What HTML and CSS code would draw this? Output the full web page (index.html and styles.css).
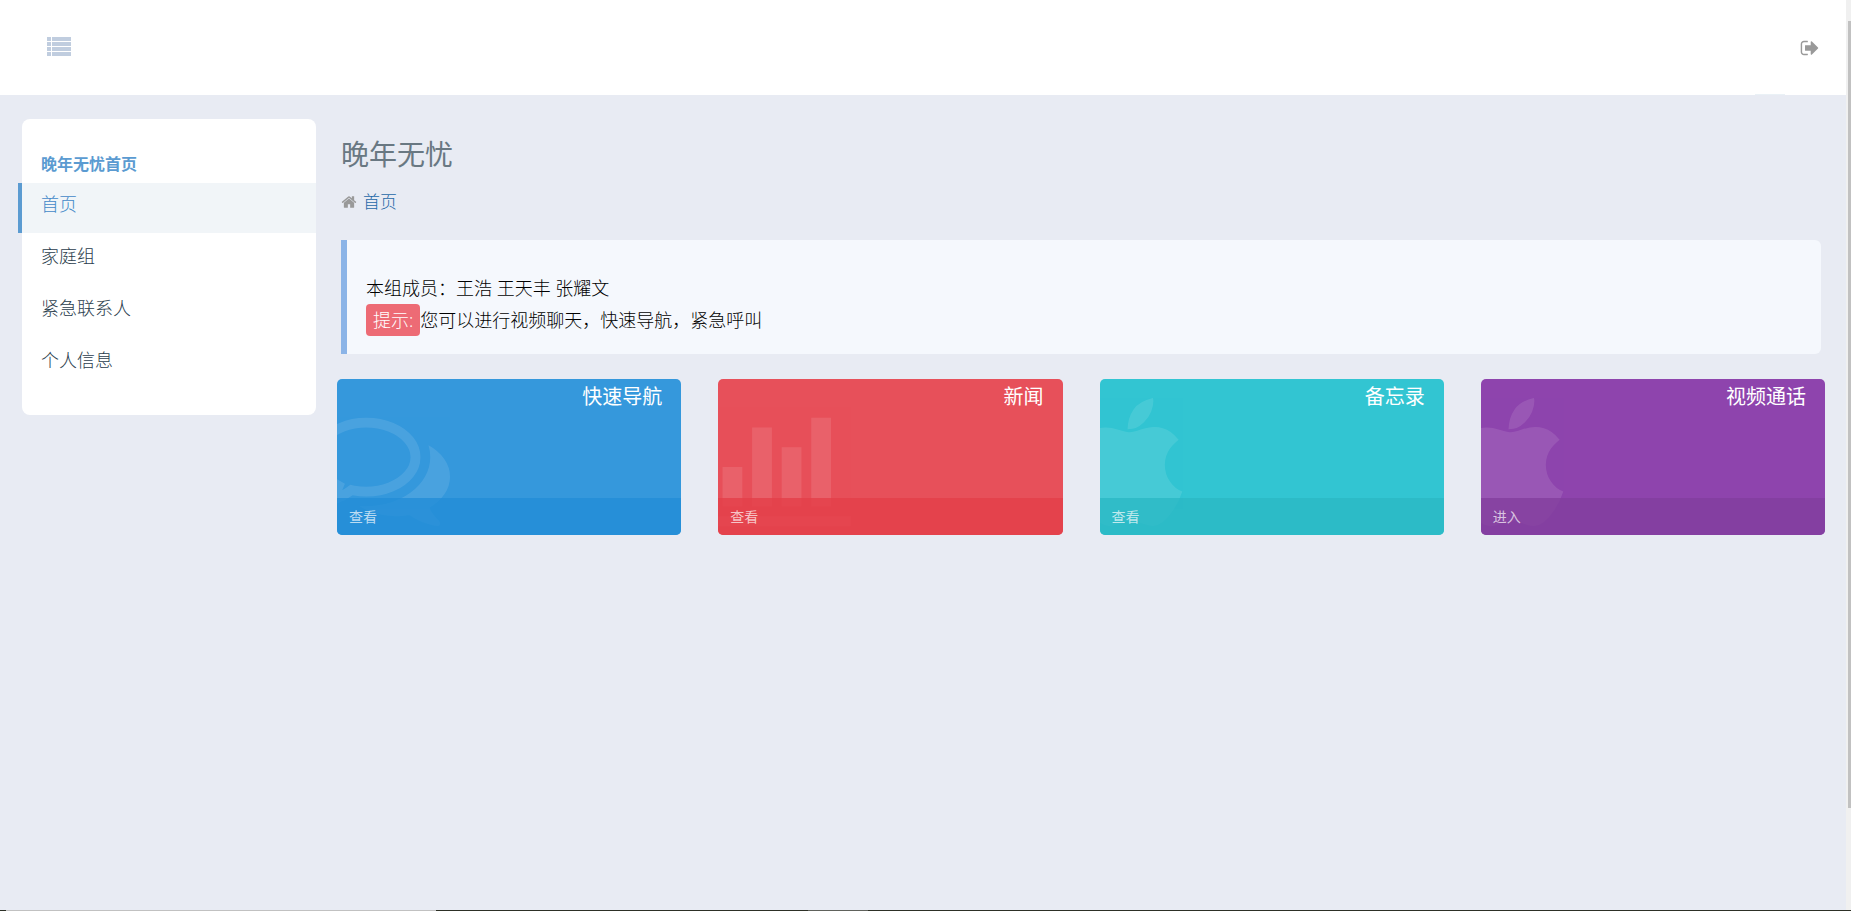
FILE: index.html
```html
<!DOCTYPE html>
<html lang="zh-CN">
<head>
<meta charset="utf-8">
<title>晚年无忧</title>
<link rel="stylesheet" href="styles.css">
</head>
<body>
<header class="topbar">
  <button class="icon-btn menu-btn" type="button" aria-label="菜单">
    <svg width="25" height="19" viewBox="0 0 25 19" fill="currentColor" aria-hidden="true"><path d="M0 0h4v4H0zM5 0h19v4H5zM0 5h4v4H0zM5 5h19v4H5zM0 10h4v4H0zM5 10h19v4H5zM0 15h4v4H0zM5 15h19v4H5z"/></svg>
  </button>
  <button class="icon-btn logout-btn" type="button" aria-label="退出">
    <svg width="20" height="20" viewBox="0 0 1792 1792" fill="currentColor" aria-hidden="true"><path d="M704 1440q0 4 1 20t.5 26.500-3 23.500-10 19.500-20.500 6.500h-320q-119 0-203.500-84.500t-84.500-203.500v-704q0-119 84.500-203.500t203.500-84.500h320q13 0 22.500 9.500t9.500 22.500q0 4 1 20t.5 26.500-3 23.500-10 19.500-20.500 6.500h-320q-66 0-113 47t-47 113v704q0 66 47 113t113 47h312l11.500 1 11.500 3 8 5.500 7 9 2 13.500zm928-544q0 26-19 45l-544 544q-19 19-45 19t-45-19-19-45v-288h-448q-26 0-45-19t-19-45v-384q0-26 19-45t45-19h448v-288q0-26 19-45t45-19 45 19l544 544q19 19 19 45z"/></svg>
  </button>
</header>

<div class="layout">
  <nav class="sidebar" aria-label="主导航">
    <h2 class="sidebar-title">晚年无忧首页</h2>
    <ul class="nav-list">
      <li><a class="nav-link active" href="#" aria-current="page">首页</a></li>
      <li><a class="nav-link" href="#">家庭组</a></li>
      <li><a class="nav-link" href="#">紧急联系人</a></li>
      <li><a class="nav-link" href="#">个人信息</a></li>
    </ul>
  </nav>

  <main class="content">
    <h1 class="page-title">晚年无忧</h1>
    <div class="breadcrumb">
      <svg width="16" height="16" viewBox="0 0 1792 1792" fill="currentColor" aria-hidden="true"><path d="M1472 992v480q0 26-19 45t-45 19h-384v-384h-256v384h-384q-26 0-45-19t-19-45v-480q0-1 .5-3t.5-3l575-474 575 474q1 2 1 6zm223-69l-62 74q-8 9-21 11h-3q-13 0-21-7l-692-577-692 577q-12 8-24 7-13-2-21-11l-62-74q-8-10-7-23.500t11-21.500l719-599q32-26 76-26t76 26l244 204v-195q0-14 9-23t23-9h192q14 0 23 9t9 23v408l219 182q10 8 11 21.500t-7 23.500z"/></svg>
      <a href="#">首页</a>
    </div>

    <section class="note">
      <p>本组成员：王浩 王天丰 张耀文</p>
      <p><span class="label">提示:</span>您可以进行视频聊天，快速导航，紧急呼叫</p>
    </section>

    <div class="cards">
      <article class="card blue">
        <svg class="card-icon" viewBox="0 0 1792 1792" aria-hidden="true"><path d="M704 384q-153 0-286 52t-211.500 141-78.500 191q0 82 53 158t149 132l97 56-35 84q34-20 62-39l44-31 53 10q78 14 153 14 153 0 286-52t211.500-141 78.500-191-78.500-191-211.500-141-286-52zm0-128q191 0 353.500 68.500t256.500 186.500 94 257-94 257-256.500 186.500-353.500 68.500q-86 0-176-16-124 88-278 128-36 9-86 16h-3q-11 0-20.500-8t-11.500-21q-1-3-1-6.500t.5-6.500 2-6l2.500-5 3.500-5.500 4-5 4.500-5 4-4.500q5-6 23-25t26-27.500 22.500-29 25-38.500 20.500-44q-124-72-195-177t-71-224q0-139 94-257t256.500-186.500 353.500-68.500zm822 1169q10 24 20.500 44t25 38.500 22.500 29 26 27.500 23 25q1 1 4 4.500t4.500 5 4 5 3.500 5.500l2.500 5 2 6 .5 6.500-1 6.500q-3 14-13 22t-22 7q-50-7-86-16-154-40-278-128-90 16-176 16-271 0-472-132 58 4 88 4 161 0 309-45t264-129q125-92 192-212t67-254q0-77-23-152 129 71 204 178t75 230q0 120-71 224.500t-195 176.500z"/></svg>
        <h3 class="card-title">快速导航</h3>
        <a class="card-more" href="#">查看</a>
      </article>
      <article class="card red">
        <svg class="card-icon" viewBox="0 0 2048 1792" aria-hidden="true"><path d="M640 896v512h-256v-512h256zm384-512v1024h-256v-1024h256zm1024 1152v128h-2048v-1536h128v1408h1920zm-640-896v768h-256v-768h256zm384-384v1152h-256v-1152h256z"/></svg>
        <h3 class="card-title">新闻</h3>
        <a class="card-more" href="#">查看</a>
      </article>
      <article class="card teal">
        <svg class="card-icon" viewBox="192 0 1408 1792" aria-hidden="true"><path d="M1585 1215q-39 125-123 250-129 196-257 196-49 0-140-32-86-32-151-32-61 0-142 33-81 34-132 34-152 0-301-259-147-261-147-503 0-228 113-374 113-144 284-144 72 0 177 30 104 30 138 30 45 0 143-34 102-34 173-34 119 0 213 65 52 36 104 100-79 67-114 118-65 94-65 207 0 124 69 223t158 126zm-376-1173q0 61-29 136-30 75-93 138-54 54-108 72-37 11-104 17 3-149 78-257 74-107 250-148 1 3 2.500 11t2.500 11q0 4 .5 10t.5 10z"/></svg>
        <h3 class="card-title">备忘录</h3>
        <a class="card-more" href="#">查看</a>
      </article>
      <article class="card purple">
        <svg class="card-icon" viewBox="192 0 1408 1792" aria-hidden="true"><path d="M1585 1215q-39 125-123 250-129 196-257 196-49 0-140-32-86-32-151-32-61 0-142 33-81 34-132 34-152 0-301-259-147-261-147-503 0-228 113-374 113-144 284-144 72 0 177 30 104 30 138 30 45 0 143-34 102-34 173-34 119 0 213 65 52 36 104 100-79 67-114 118-65 94-65 207 0 124 69 223t158 126zm-376-1173q0 61-29 136-30 75-93 138-54 54-108 72-37 11-104 17 3-149 78-257 74-107 250-148 1 3 2.500 11t2.500 11q0 4 .5 10t.5 10z"/></svg>
        <h3 class="card-title">视频通话</h3>
        <a class="card-more" href="#">进入</a>
      </article>
    </div>
  </main>
</div>
<div class="scroll-track"><div class="scroll-thumb"></div></div>
<div class="bottom-line"></div>
</body>
</html>
```
FILE: styles.css
```css
* { box-sizing: border-box; }

body {
  margin: 0;
  min-height: 100vh;
  background: #e8ebf3;
  color: #000;
  font-family: "Open Sans", "Noto Sans CJK SC", sans-serif;
  font-size: 18px;
  font-weight: 300;
  line-height: 32px;
}

h1, h2, h3, p, ul { margin: 0; padding: 0; }
ul { list-style: none; }
a { text-decoration: none; }
svg { display: block; }

.topbar {
  position: relative;
  display: flex;
  align-items: center;
  justify-content: space-between;
  height: 95px;
  padding: 0 31px 0 47px;
  background: #fff;
}

.topbar::after {
  content: "";
  position: absolute;
  right: 66px;
  bottom: 0;
  width: 30px;
  height: 1px;
  background: #eaf1f6;
}

.icon-btn {
  padding: 0;
  border: 0;
  background: none;
  cursor: pointer;
}
.menu-btn {
  padding-bottom: 2px;
  color: #c0cddf;
}
.logout-btn { color: #999; }

.layout {
  display: flex;
  align-items: flex-start;
  gap: 21px;
  padding: 24px 26px 24px 22px;
}

.sidebar {
  flex: 0 0 294px;
  padding: 29px 0 26px;
  border-radius: 8px;
  background: #fff;
}

.sidebar-title {
  padding: 0 19px 3px;
  color: #5b9bd1;
  font-size: 16px;
  font-weight: 700;
}

.nav-list {
  display: grid;
  gap: 2px;
}

.nav-link {
  display: block;
  padding: 5px 19px 13px;
  color: #2b3d4d;
}

.nav-link.active {
  margin-left: -4px;
  border-left: 4px solid #5b9bd1;
  background: #f1f5f8;
  color: #4389c8;
}

.content {
  flex: 1;
  min-width: 0;
  padding-top: 15px;
}

.page-title {
  padding: 0 4px;
  color: #697882;
  font-size: 28px;
  font-weight: 400;
  line-height: 40px;
}

.breadcrumb {
  display: flex;
  align-items: center;
  gap: 6px;
  padding: 12px 4px 22px;
  color: #999;
  font-size: 17px;
}
.breadcrumb a { color: #1f68a8; }

.note {
  margin: 0 4px 25px;
  padding: 32px 19px 18px;
  border-left: 6px solid #8bb4e7;
  border-radius: 0 6px 6px 0;
  background: #f5f8fd;
}

.label {
  display: inline-block;
  padding: 0 7px;
  border-radius: 4px;
  background: #ed6b75;
  color: #fff;
}

.cards {
  display: grid;
  grid-template-columns: repeat(4, 1fr);
  gap: 37px;
}

.card {
  position: relative;
  display: flex;
  flex-direction: column;
  justify-content: space-between;
  height: 156px;
  overflow: hidden;
  border-radius: 5px;
  color: #fff;
}

.card-icon {
  position: absolute;
  top: 19px;
  left: -25px;
  height: 138px;
  fill: #fff;
  opacity: 0.1;
}

.card-title {
  padding: 2px 19px 0;
  font-size: 20px;
  font-weight: 400;
  text-align: right;
}

.card-more {
  position: relative;
  height: 37px;
  padding: 3px 12px;
  color: rgba(255, 255, 255, 0.7);
  font-size: 14px;
  font-weight: 400;
}

.blue { background: #3598dc; }
.red { background: #e7505a; }
.teal { background: #32c5d2; }
.purple { background: #8e44ad; }

.blue .card-more { background: rgba(35, 141, 215, 0.8); }
.red .card-more { background: rgba(228, 62, 73, 0.8); }
.teal .card-more { background: rgba(43, 184, 196, 0.8); }
.purple .card-more { background: rgba(130, 62, 158, 0.8); }

.scroll-track {
  position: fixed;
  top: 0;
  right: 0;
  bottom: 0;
  width: 5px;
  background: #f0f0f0;
}

.scroll-thumb {
  height: 787px;
  margin: 21px 0 0 2px;
  background: #c1c1c1;
}

.bottom-line {
  position: fixed;
  right: 0;
  bottom: 0;
  left: 0;
  height: 1px;
  background: linear-gradient(to right, #2d3026 6px, #c1c1c1 6px 436px, #2d3026 436px 808px, #60625c 808px 868px, #2d3026 868px);
}
```
